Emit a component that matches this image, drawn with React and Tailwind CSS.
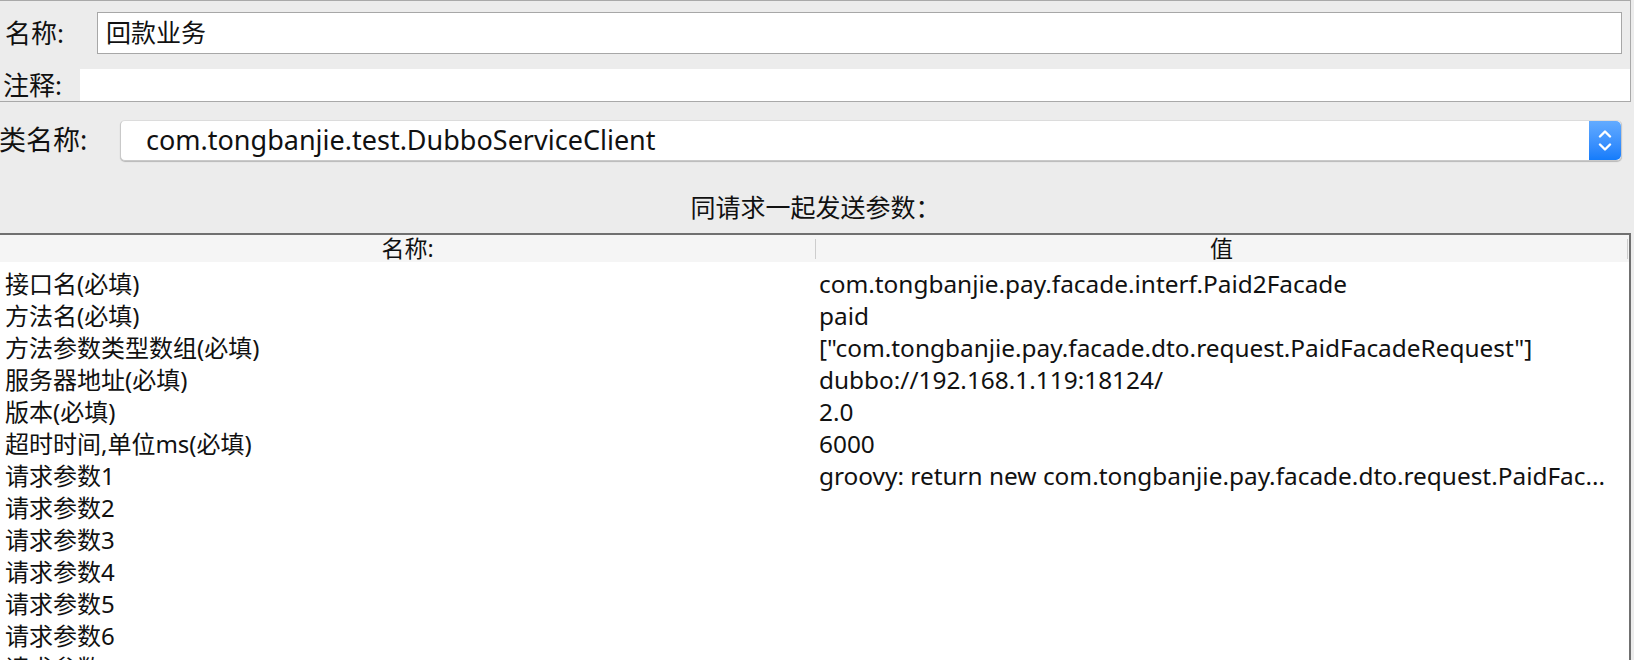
import React from 'react';

const rows = [
  ['接口名(必填)', 'com.tongbanjie.pay.facade.interf.Paid2Facade'],
  ['方法名(必填)', 'paid'],
  ['方法参数类型数组(必填)', '["com.tongbanjie.pay.facade.dto.request.PaidFacadeRequest"]'],
  ['服务器地址(必填)', 'dubbo://192.168.1.119:18124/'],
  ['版本(必填)', '2.0'],
  ['超时时间,单位ms(必填)', '6000'],
  ['请求参数1', 'groovy: return new com.tongbanjie.pay.facade.dto.request.PaidFac...'],
  ['请求参数2', ''],
  ['请求参数3', ''],
  ['请求参数4', ''],
  ['请求参数5', ''],
  ['请求参数6', ''],
  ['请求参数7', ''],
];

function Stepper() {
  return (
    <div className="w-[32px] h-full rounded-r-[5px] bg-gradient-to-b from-[#62abff] to-[#137cfb] flex flex-col items-center justify-center gap-[5px]">
      <svg width="14" height="9" viewBox="0 0 14 9" fill="none">
        <path d="M2 7.5L7 2.5L12 7.5" stroke="white" strokeWidth="2.4" strokeLinecap="round" strokeLinejoin="round" />
      </svg>
      <svg width="14" height="9" viewBox="0 0 14 9" fill="none">
        <path d="M2 1.5L7 6.5L12 1.5" stroke="white" strokeWidth="2.4" strokeLinecap="round" strokeLinejoin="round" />
      </svg>
    </div>
  );
}

export default function App() {
  return (
    <div className="w-[1634px] h-[660px] overflow-hidden bg-[#ececec] text-[#111] font-['Noto_Sans','Noto_Sans_CJK_SC',sans-serif]">
      {/* name / comment panel */}
      <div className="w-[1631px] border-t border-r border-[#a9a9a9] pt-[11px]">
        <div className="flex items-center h-[42px]">
          <span className="w-[97px] pl-[5px] text-[26px] leading-none">名称:</span>
          <div className="flex-1 mr-[8px] h-full bg-white border border-[#a7a7a7] flex items-center pl-[8px] text-[25px]">
            回款业务
          </div>
        </div>
        <div className="mt-[15px] h-[33px] flex border-b border-[#a9a9a9]">
          <span className="w-[80px] pl-[3px] text-[26px] flex items-center">注释:</span>
          <div className="flex-1 bg-white" />
        </div>
      </div>

      {/* class name combo */}
      <div className="mt-[18px] h-[41px] flex items-center">
        <span className="w-[121px] -ml-[1px] text-[27px]">类名称:</span>
        <div className="w-[1502px] h-full flex bg-white rounded-[5px] border border-[#c9c9c9] border-t-[#dcdcdc] shadow-[0_1px_1px_rgba(0,0,0,0.22)]">
          <div className="flex-1 flex items-center pl-[25px] text-[27px]">com.tongbanjie.test.DubboServiceClient</div>
          <Stepper />
        </div>
      </div>

      <div className="w-[1631px] h-[72px] pt-[31px] text-center text-[25px] leading-[30px]">同请求一起发送参数：</div>

      {/* parameter table */}
      <div className="w-[1631px] border-t-2 border-r-2 border-[#707070] bg-white">
        <div className="h-[27px] flex items-center bg-[#f5f5f5] text-[23px]">
          <div className="w-[815px] text-center">名称:</div>
          <div className="w-px h-[20px] bg-[#cdcdcd]" />
          <div className="flex-1 text-center">值</div>
          <div className="w-px h-[20px] bg-[#cdcdcd] mr-[1px]" />
        </div>
        <div className="pt-[6px]">
          {rows.map(([k, v]) => (
            <div key={k} className="h-[32px] flex items-center text-[24px] whitespace-nowrap">
              <div className="w-[815px] pl-[5px]">{k}</div>
              <div className="flex-1 pl-[4px] text-[24.4px]">{v}</div>
            </div>
          ))}
        </div>
      </div>
    </div>
  );
}
